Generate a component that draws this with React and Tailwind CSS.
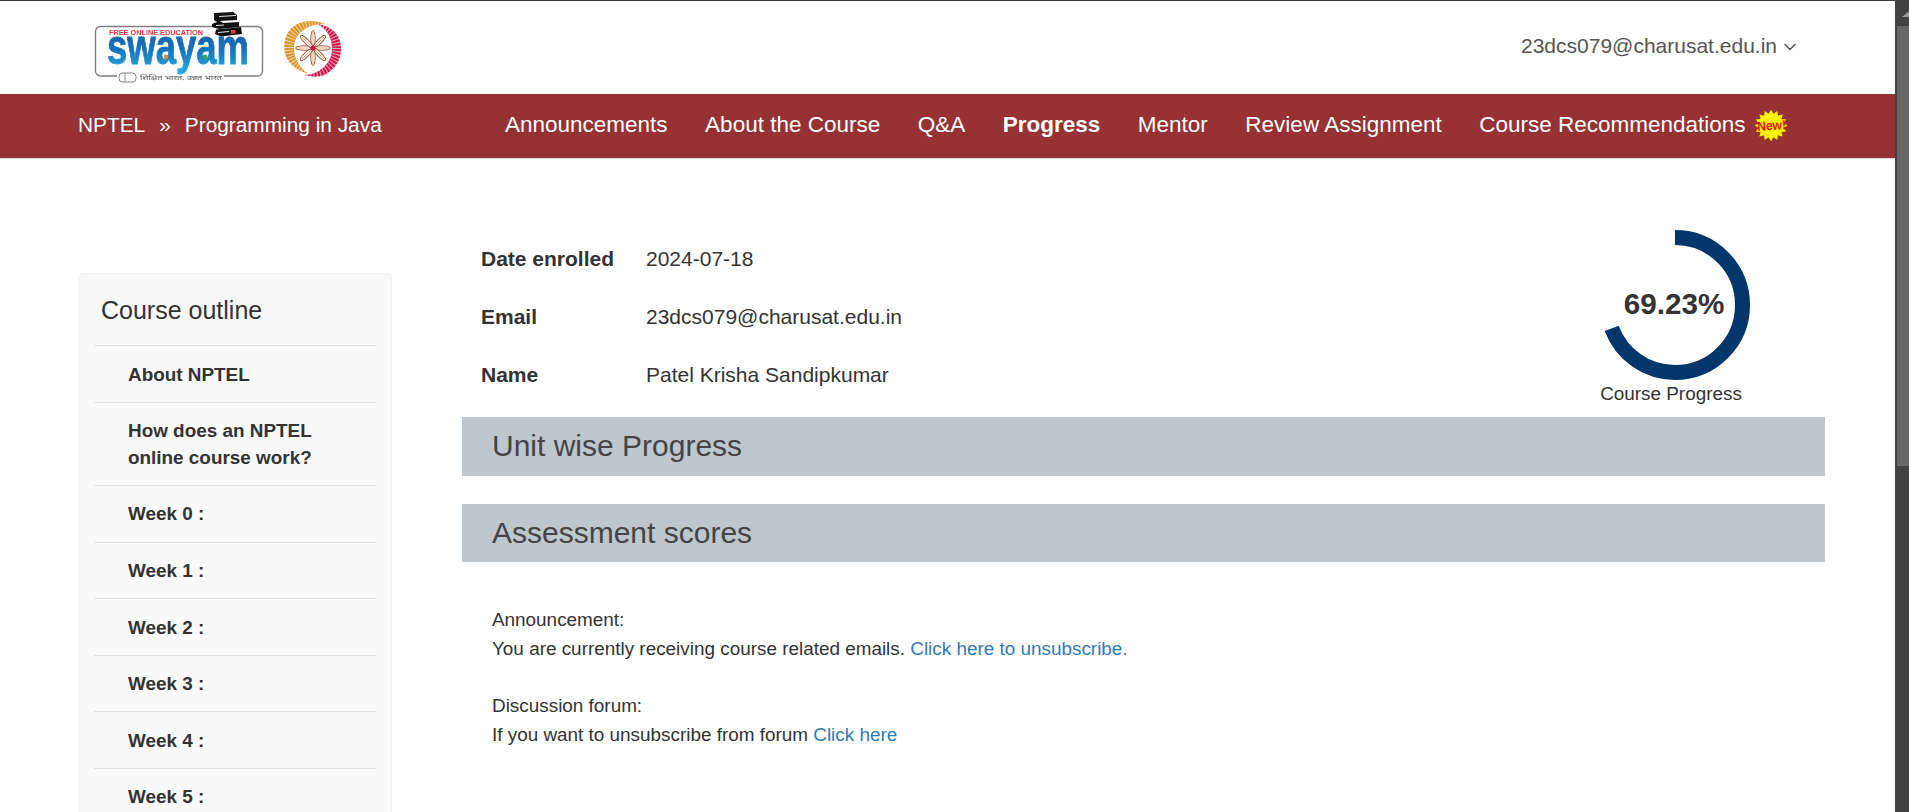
import React from "react";
import { ChevronDown } from "lucide-react";

const navItems = ["Announcements", "About the Course", "Q&A", "Progress", "Mentor", "Review Assignment"];
const outline = ["About NPTEL", "How does an NPTEL online course work?", "Week 0 :", "Week 1 :", "Week 2 :", "Week 3 :", "Week 4 :", "Week 5 :"];

function SwayamLogo() {
  return (
    <svg width="180" height="80" viewBox="0 0 180 80" className="blur-[0.4px]">
      <defs>
        <linearGradient id="sw" x1="0" y1="0" x2="0" y2="1">
          <stop offset="0" stopColor="#14539f" />
          <stop offset="0.55" stopColor="#1773bd" />
          <stop offset="1" stopColor="#2ab0e6" />
        </linearGradient>
      </defs>
      <rect x="5.5" y="19.5" width="167" height="49.5" rx="5" fill="none" stroke="#808080" strokeWidth="1.4" />
      <rect x="27" y="64" width="107" height="10" fill="#fff" />
      <text x="19" y="28" fontSize="6.6" fontWeight="700" fill="#e23a45" textLength="94" lengthAdjust="spacingAndGlyphs" fontFamily="Liberation Sans, sans-serif">FREE ONLINE EDUCATION</text>
      <text x="17" y="57" fontSize="50" fontWeight="700" fill="url(#sw)" stroke="url(#sw)" strokeWidth="0.9" textLength="142" lengthAdjust="spacingAndGlyphs" fontFamily="Liberation Sans, sans-serif">swayam</text>
      <circle cx="76" cy="50" r="2.4" fill="#e8862a" />
      <circle cx="115" cy="50" r="2.4" fill="#3aa655" />
      <path d="M124 6 L143 5 L147 8 L147 13 L130 14 L133 16 L149 15 L149 20 L129 22 L122 20 L122 17 L127 15 L124 13 Z" fill="#111" />
      <path d="M126 22.5 L151 20 L152 27 L131 29.5 L125 27 Z" fill="#111" />
      <path d="M129 9.5 L146 8.5 M126 18.5 L134 18" stroke="#e5e5e5" strokeWidth="1" fill="none" />
      <path d="M128 25.5 L139 24.5" stroke="#e5e5e5" strokeWidth="1.2" fill="none" />
      <rect x="141" y="23" width="4.5" height="3.5" fill="#e23a45" />
      <rect x="29" y="66" width="17" height="9" rx="3.5" fill="#fff" stroke="#808080" strokeWidth="1" />
      <path d="M35 66 V75" stroke="#808080" strokeWidth="0.8" />
      <text x="50" y="73" fontSize="5.6" fill="#555" textLength="82" lengthAdjust="spacingAndGlyphs" fontFamily="Noto Sans, DejaVu Sans, sans-serif">शिक्षित भारत, उन्नत भारत</text>
    </svg>
  );
}

function Emblem() {
  const petals = [0, 45, 90, 135, 180, 225, 270, 315];
  return (
    <svg width="58" height="58" viewBox="0 0 58 58" className="blur-[0.3px]">
      <path d="M41 5 C30 -1 0 0 0.3 29 C0.5 44 14 52 24 54.5 C16 49 10 40 10 29 C10 14 25 4 41 5 Z" fill="#dd9428" />
      <path d="M33 5 C50 7 57 18 57 30 C57 46 44 57 34 57.5 C30 58 24 57 20 56 C34 56 48 45 48 30 C48 18 42 9 33 5 Z" fill="#d3174a" />
      <circle cx="29" cy="29" r="24" fill="none" stroke="#fff" strokeWidth="15" strokeDasharray="1 2" opacity="0.6" />
      {petals.map((a) => (
        <g key={a} transform={`rotate(${a} 29 29)`}>
          <ellipse cx="29" cy="20" rx="2.2" ry="8.5" fill="#fff" stroke="#9c5a3c" strokeWidth="1" />
          <path d="M29 13 V27" stroke="#d9913c" strokeWidth="0.7" />
        </g>
      ))}
      <circle cx="29" cy="29" r="2.6" fill="#d3174a" />
    </svg>
  );
}

function NewBadge() {
  const pts = [];
  for (let i = 0; i < 32; i++) {
    const r = i % 2 === 0 ? 16.5 : 12.5;
    const t = (i / 32) * Math.PI * 2;
    pts.push(`${17 + r * Math.cos(t)},${15.5 + r * 0.95 * Math.sin(t)}`);
  }
  return (
    <svg width="34" height="31" viewBox="0 0 34 31" className="ml-[8px] shrink-0 overflow-visible">
      <polygon points={pts.join(" ")} fill="#fff200" />
      <text x="3" y="20" fontSize="13" fontWeight="700" fill="#e0101e" textLength="29" lengthAdjust="spacingAndGlyphs" transform="rotate(-4 17 15)" fontFamily="Liberation Sans, sans-serif">New!</text>
    </svg>
  );
}

function ProgressRing() {
  const r = 67.5;
  const c = 2 * Math.PI * r;
  return (
    <svg width="150" height="150" viewBox="0 0 150 150" className="-rotate-90">
      <circle cx="75" cy="75" r={r} fill="none" stroke="#03366b" strokeWidth="15" strokeDasharray={`${c * 0.6923} ${c}`} />
    </svg>
  );
}

export default function App() {
  return (
    <div className="flex h-[812px] w-full overflow-hidden bg-white font-['Liberation_Sans',Arial,sans-serif] text-[#333]">
      <div className="flex min-w-0 flex-1 flex-col border-t border-[#3c4043]">
        <header className="relative flex h-[93px] shrink-0 items-center justify-between pl-[95px] pr-[95px]">
          <div className="flex items-center">
            <div className="-ml-[5px] mt-[-1px]"><SwayamLogo /></div>
            <div className="ml-[14px] mt-[1px]"><Emblem /></div>
          </div>
          <div className="mb-[3px] flex items-center text-[21px] text-[#555]">
            <span>23dcs079@charusat.edu.in</span>
            <ChevronDown size={20} strokeWidth={1.8} className="ml-[3px] mt-[2px]" />
          </div>
        </header>

        <nav className="flex h-[64px] shrink-0 items-center bg-[#963233] pb-[2px] pl-[78px] text-white">
          <div className="flex w-[427px] shrink-0 items-center text-[20.85px]">
            <span>NPTEL</span>
            <span className="mx-[14px]">»</span>
            <span>Programming in Java</span>
          </div>
          <div className="flex items-center gap-[37.5px] text-[22.5px]">
            {navItems.map((item) => (
              <span key={item} className={item === "Progress" ? "font-bold" : ""}>{item}</span>
            ))}
            <span className="flex items-center">
              Course Recommendations
              <NewBadge />
            </span>
          </div>
        </nav>
        <div className="h-px shrink-0 bg-[#dddddd]" />

        <div className="flex min-h-0 flex-1 overflow-hidden">
          <aside className="ml-[78px] mt-[114px] h-[560px] w-[314px] shrink-0 rounded-[5px] border border-[#f2f2f2] bg-[#f9f9f9] px-[15px]">
            <div className="flex h-[72px] items-center border-b border-[#e2e2e2] pl-[7px] pt-[2px] text-[25px]">Course outline</div>
            <ul>
              {outline.map((item) => (
                <li key={item} className="border-b border-[#e2e2e2] pb-[13.3px] pl-[34px] pr-[30px] pt-[15.5px] text-[18.9px] font-bold leading-[26.8px]">{item}</li>
              ))}
            </ul>
          </aside>

          <main className="ml-[70px] w-[1363px] shrink-0 pt-[71px]">
            <div className="flex h-[187px] items-start justify-between">
              <dl className="pl-[19px] text-[21px]">
                {[["Date enrolled", "2024-07-18"], ["Email", "23dcs079@charusat.edu.in"], ["Name", "Patel Krisha Sandipkumar"]].map(([k, v]) => (
                  <div key={k} className="flex h-[58px] items-center">
                    <dt className="w-[165px] font-bold">{k}</dt>
                    <dd>{v}</dd>
                  </div>
                ))}
              </dl>
              <div className="relative mr-[75px] flex w-[150px] flex-col items-center">
                <ProgressRing />
                <span className="absolute left-0 right-[2px] top-[56px] text-center text-[29.7px] font-bold leading-[36px]">69.23%</span>
                <span className="whitespace-nowrap pr-2 text-[18.9px] leading-[27px]">Course Progress</span>
              </div>
            </div>
            <h2 className="flex h-[59px] items-center bg-[#bec7cc] pb-[2px] pl-[30px] text-[30px] text-[#444]">Unit wise Progress</h2>
            <h2 className="mt-[28px] flex h-[58px] items-center bg-[#bec7cc] pb-[2px] pl-[30px] text-[30px] text-[#444]">Assessment scores</h2>
            <div className="pl-[30px] pt-[44px] text-[18.9px] leading-[28.5px]">
              <p>Announcement:</p>
              <p>You are currently receiving course related emails. <a className="text-[#337ab7]">Click here to unsubscribe.</a></p>
              <p className="mt-[29.2px]">Discussion forum:</p>
              <p>If you want to unsubscribe from forum <a className="text-[#337ab7]">Click here</a></p>
            </div>
          </main>
        </div>
      </div>

      <div className="flex h-full w-[14px] shrink-0 flex-col bg-[#424242]">
        <div className="flex h-[26px] shrink-0 items-end justify-end overflow-hidden pb-[9px]">
          <div className="h-0 w-0 border-b-[6px] border-l-[7px] border-b-[#9a9a9a] border-l-transparent" />
        </div>
        <div className="ml-[2px] h-[440px] bg-[#686868]" />
      </div>
    </div>
  );
}
